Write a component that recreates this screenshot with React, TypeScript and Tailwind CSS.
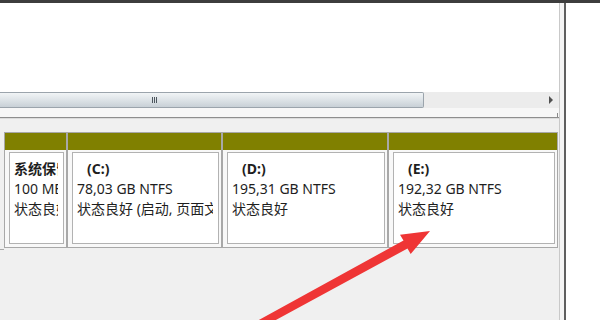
import React from "react";

const parts = [
  { w: "w-[63px]", title: "系统保留", indent: false, size: "100 MB NTFS", status: "状态良好 (系统, 活动, 主分区)" },
  { w: "w-[155px]", title: "(C:)", indent: true, size: "78,03 GB NTFS", status: "状态良好 (启动, 页面文件, 故障转储, 主分区)" },
  { w: "w-[166px]", title: "(D:)", indent: true, size: "195,31 GB NTFS", status: "状态良好" },
  { w: "w-[170px]", title: "(E:)", indent: true, size: "192,32 GB NTFS", status: "状态良好" },
];

const App: React.FC = () => {
  return (
    <div
      className="relative w-[600px] h-[320px] overflow-hidden bg-white text-[14px] text-[#1e1e1e]"
      style={{ fontFamily: '"Noto Sans", "Noto Sans CJK SC", sans-serif' }}>
      {/* title bar strip */}
      <div className="h-[3px] bg-[#3d3d3d]" />

      <div className="flex h-[317px]">
        {/* main panel */}
        <div className="w-[560px] flex flex-col border-r border-[#c9c9c9]">
          {/* empty list area */}
          <div className="h-[89px] bg-white" />

          {/* horizontal scrollbar */}
          <div className="h-[16px] flex bg-[#ececec]">
            <div className="w-[424px] h-full flex items-center border border-l-0 border-[#9ba4ac] rounded-r-[2px] bg-gradient-to-b from-[#f1f4f6] via-[#dde3e7] to-[#c8d0d6]">
              <div className="ml-[152px] flex gap-[1px]">
                <div className="w-[1px] h-[6px] bg-[#4d565e]" />
                <div className="w-[1px] h-[6px] bg-[#4d565e]" />
                <div className="w-[1px] h-[6px] bg-[#4d565e]" />
              </div>
            </div>
            <div className="flex-1" />
            <div className="w-[17px] flex items-center justify-center">
              <div className="w-0 h-0 border-y-[4px] border-y-transparent border-l-[4px] border-l-[#505050]" />
            </div>
          </div>

          {/* gap under scrollbar */}
          <div className="h-[9px] flex justify-end items-end bg-[#f7f7f7] pr-[1px]">
            <div className="w-[1px] h-[4px] bg-[#8a8a8a]" />
          </div>
          <div className="h-[1px] bg-[#8e8e8e]" />
          <div className="h-[1px] bg-[#dcdcdc]" />

          {/* graphical disk view */}
          <div className="flex-1 bg-[#f0f0f0] pt-[13px]">
            <div className="flex h-[118px]">
              <div className="w-[4px] mt-[-6px] border-b border-[#a9a9a9]" />
              {parts.map((p, i) => (
                <div key={i} className={`${p.w} h-[116px] flex flex-col border border-[#a8a8a8] bg-[#f8f8f8]`}>
                  <div className="h-[17px] bg-[#808000]" />
                  <div className="flex-1 pt-[2px] pb-[3px] pl-[4px] pr-[2px]">
                    <div className="h-full bg-white border border-[#b2b2b2] pt-[6px] pl-[4px] pr-[5px]">
                      <div className="overflow-hidden whitespace-nowrap leading-[20px]">
                        <div className={`font-bold ${p.indent ? "pl-[10px]" : ""}`}>{p.title}</div>
                        <div>{p.size}</div>
                        <div>{p.status}</div>
                      </div>
                    </div>
                  </div>
                </div>
              ))}
            </div>
          </div>
        </div>

        {/* right side */}
        <div className="w-[4px] bg-[#f4f4f4]" />
        <div className="w-[2px] bg-[#5f5f5f]" />
        <div className="flex-1 bg-white" />
      </div>

      {/* red annotation arrow */}
      <svg className="absolute inset-0 pointer-events-none" width="600" height="320" viewBox="0 0 600 320">
        <polygon
          points="430,231 400,234.7 403.5,240.5 247,326.5 251,333.5 407.5,248.5 410.7,254.1"
          fill="#ef3535"
        />
      </svg>
    </div>
  );
};

export default App;
